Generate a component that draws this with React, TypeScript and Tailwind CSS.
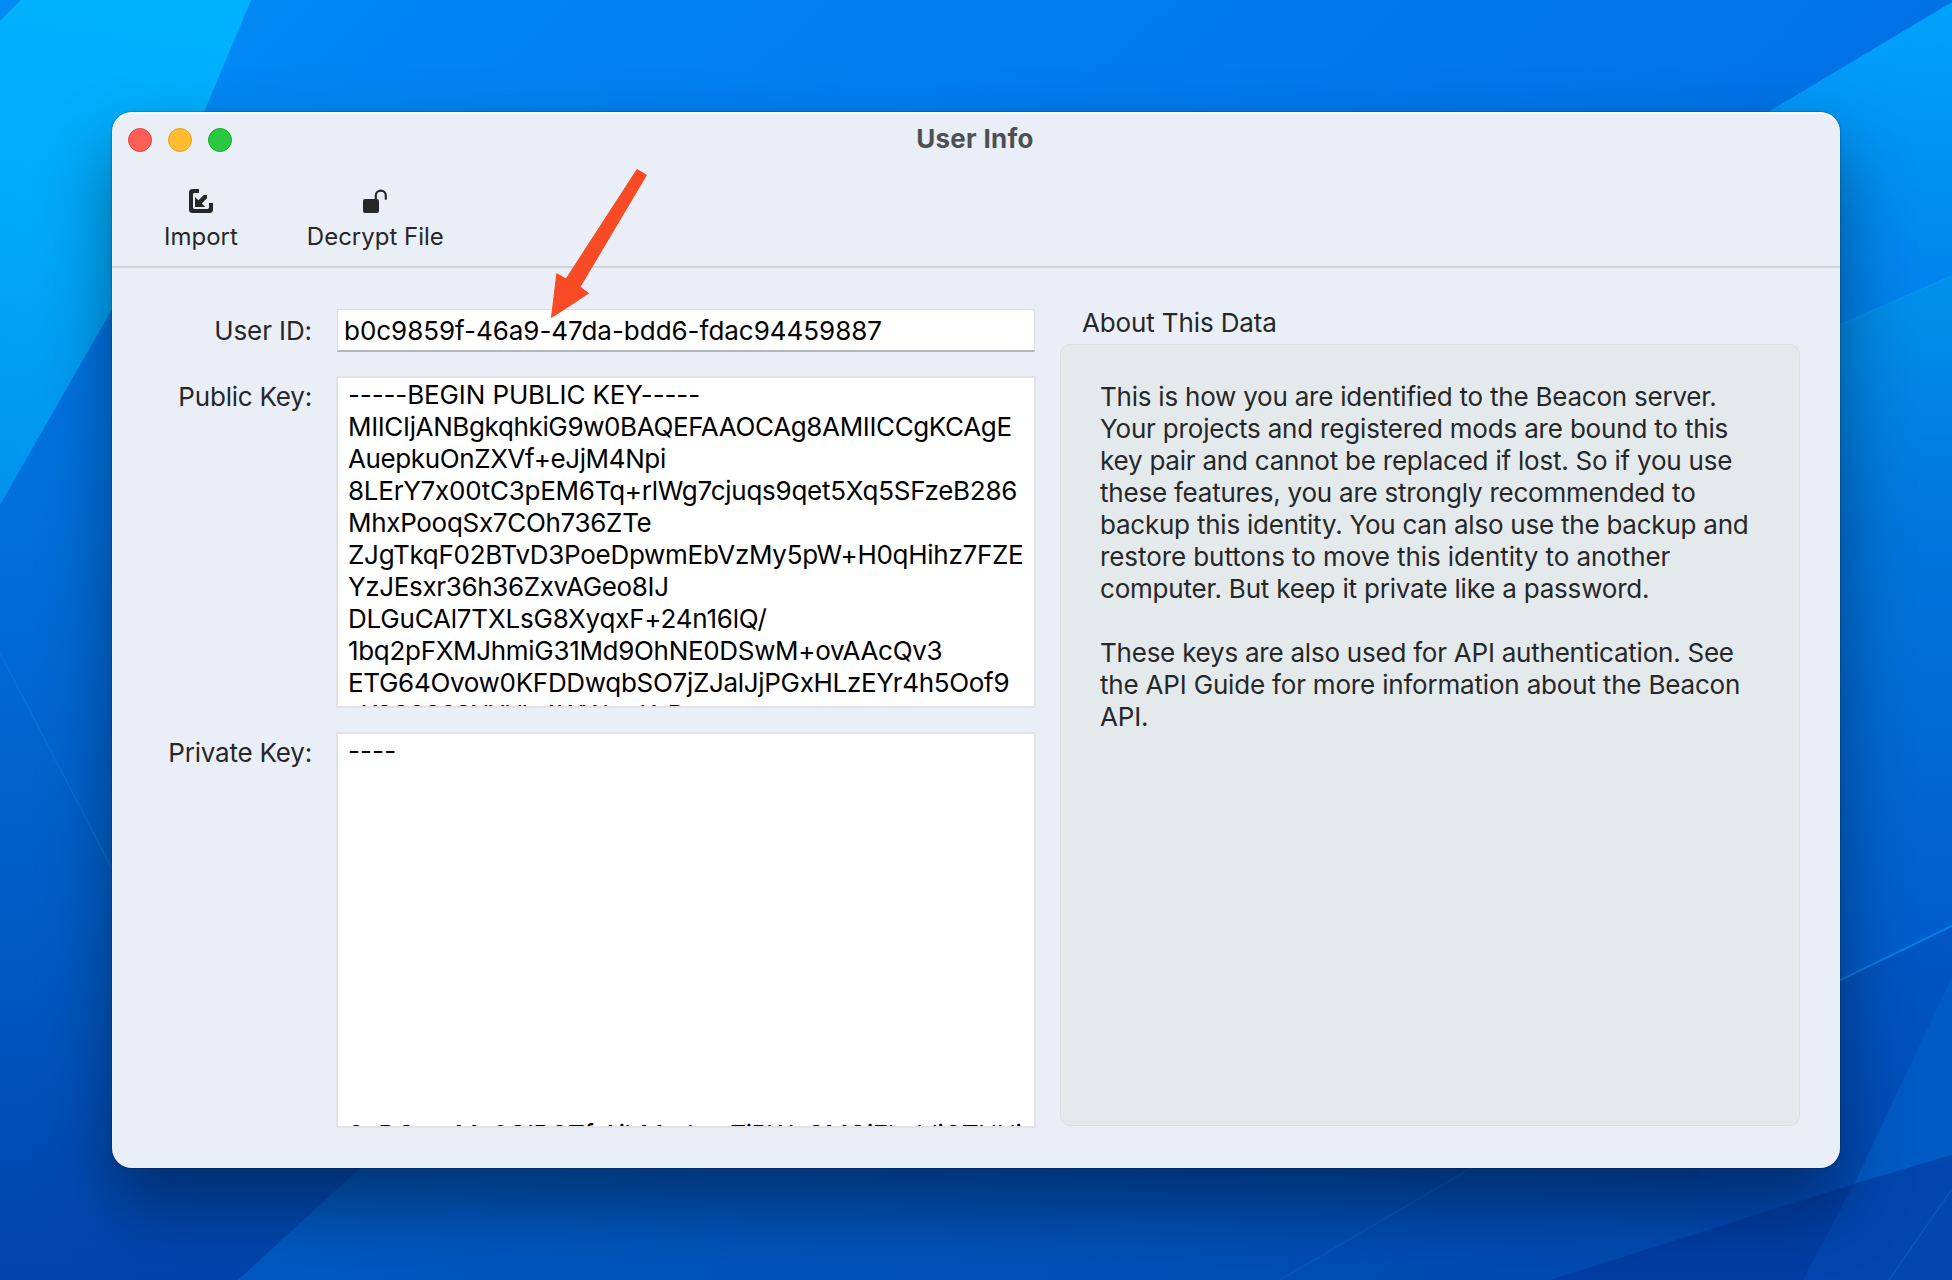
import type { ReactNode } from "react";

type Line = { text: string; tracking: string };

const publicKey: Line[] = [
  { text: "-----BEGIN PUBLIC KEY-----", tracking: "tracking-[-0.12px]" },
  { text: "MIICIjANBgkqhkiG9w0BAQEFAAOCAg8AMIICCgKCAgE", tracking: "tracking-[-0.36px]" },
  { text: "AuepkuOnZXVf+eJjM4Npi", tracking: "tracking-[-0.38px]" },
  { text: "8LErY7x00tC3pEM6Tq+rlWg7cjuqs9qet5Xq5SFzeB286", tracking: "tracking-[-0.25px]" },
  { text: "MhxPooqSx7COh736ZTe", tracking: "tracking-[-0.3px]" },
  { text: "ZJgTkqF02BTvD3PoeDpwmEbVzMy5pW+H0qHihz7FZE", tracking: "tracking-[-0.283px]" },
  { text: "YzJEsxr36h36ZxvAGeo8IJ", tracking: "tracking-[-0.351px]" },
  { text: "DLGuCAl7TXLsG8XyqxF+24n16lQ/", tracking: "tracking-[-0.2px]" },
  { text: "1bq2pFXMJhmiG31Md9OhNE0DSwM+ovAAcQv3", tracking: "tracking-[-0.312px]" },
  { text: "ETG64Ovow0KFDDwqbSO7jZJalJjPGxHLzEYr4h5Oof9", tracking: "tracking-[-0.305px]" },
  { text: "xK3C6C8SNXHhrAWWsruKcD", tracking: "tracking-[-1.6px]" },
];

const privateKeyTail = "8nDGnrnMe0GIPOTfrAjbMndnvrZjPWxGMGjEhvbljOTUUj";

const aboutLines: Line[] = [
  { text: "This is how you are identified to the Beacon server.", tracking: "tracking-[-0.226px]" },
  { text: "Your projects and registered mods are bound to this", tracking: "tracking-[-0.181px]" },
  { text: "key pair and cannot be replaced if lost. So if you use", tracking: "tracking-[-0.22px]" },
  { text: "these features, you are strongly recommended to", tracking: "tracking-[-0.22px]" },
  { text: "backup this identity. You can also use the backup and", tracking: "tracking-[-0.23px]" },
  { text: "restore buttons to move this identity to another", tracking: "tracking-[-0.08px]" },
  { text: "computer. But keep it private like a password.", tracking: "tracking-[-0.205px]" },
];

const apiLines: Line[] = [
  { text: "These keys are also used for API authentication. See", tracking: "tracking-[-0.23px]" },
  { text: "the API Guide for more information about the Beacon", tracking: "tracking-[-0.185px]" },
  { text: "API.", tracking: "tracking-[-0.2px]" },
];

function Lines({ lines }: { lines: Line[] }) {
  return (
    <>
      {lines.map((l) => (
        <div key={l.text} className={`whitespace-pre ${l.tracking}`}>
          {l.text}
        </div>
      ))}
    </>
  );
}

function Wallpaper() {
  return (
    <svg className="absolute inset-0 h-full w-full" viewBox="0 0 1952 1280" preserveAspectRatio="none" aria-hidden="true">
      <defs>
        <linearGradient id="base" x1="0" y1="0" x2="0" y2="1">
          <stop offset="0" stopColor="#007df0" />
          <stop offset="0.4" stopColor="#006fdc" />
          <stop offset="0.72" stopColor="#005cc6" />
          <stop offset="1" stopColor="#0043aa" />
        </linearGradient>
        <linearGradient id="top" x1="0" y1="0" x2="1" y2="0.06">
          <stop offset="0" stopColor="#008cf5" />
          <stop offset="0.5" stopColor="#007eef" />
          <stop offset="1" stopColor="#0072e6" />
        </linearGradient>
        <linearGradient id="leftCyan" gradientUnits="userSpaceOnUse" x1="80" y1="0" x2="0" y2="505">
          <stop offset="0" stopColor="#00b2ff" />
          <stop offset="0.45" stopColor="#00a9fb" />
          <stop offset="1" stopColor="#0092ee" />
        </linearGradient>
        <linearGradient id="rightCyan" gradientUnits="userSpaceOnUse" x1="1900" y1="20" x2="1880" y2="310">
          <stop offset="0" stopColor="#00a1fb" />
          <stop offset="1" stopColor="#0081ec" />
        </linearGradient>
        <linearGradient id="rightLow" gradientUnits="userSpaceOnUse" x1="1900" y1="290" x2="1900" y2="960">
          <stop offset="0" stopColor="#0090ec" />
          <stop offset="0.35" stopColor="#0076dd" />
          <stop offset="1" stopColor="#005ccb" />
        </linearGradient>
        <linearGradient id="rightDeep" gradientUnits="userSpaceOnUse" x1="1900" y1="930" x2="1850" y2="1280">
          <stop offset="0" stopColor="#0056c4" />
          <stop offset="1" stopColor="#0046b0" />
        </linearGradient>
        <linearGradient id="bottom" gradientUnits="userSpaceOnUse" x1="240" y1="1280" x2="1700" y2="1200">
          <stop offset="0" stopColor="#0059c1" />
          <stop offset="0.5" stopColor="#0051b8" />
          <stop offset="1" stopColor="#0049b0" />
        </linearGradient>
      </defs>
      <rect width="1952" height="1280" fill="url(#base)" />
      <path d="M0 0H1952V112H0Z" fill="url(#top)" />
      <path d="M22 0H251L204 112V200L112 309L0 505V22Z" fill="url(#leftCyan)" />
      <path d="M22 0L0 22" stroke="#20b8ff" strokeWidth="1.5" opacity="0.6" />
      <path d="M1952 2L1768 112V360L1952 276Z" fill="url(#rightCyan)" />
      <path d="M1700 388L1952 276V926L1700 1048Z" fill="url(#rightLow)" />
      <path d="M1700 386L1952 276" stroke="#10a0f4" strokeWidth="1.5" opacity="0.5" />
      <path d="M238 1280L380 1150H1600L1700 1048L1840 980L1952 926V1280Z" fill="url(#bottom)" />
      <path d="M1700 1048L1952 926V1280H1700Z" fill="url(#rightDeep)" />
      <path d="M1952 977V1155L1854 1184Z" fill="#005bc6" />
      <path d="M1550 1280L1854 1184L1803 1280Z" fill="#003da2" />
      <path d="M1854 1184L1952 1155V1280H1803Z" fill="#0046ae" />
      <path d="M1700 1048L1952 926" stroke="#0083e4" strokeWidth="2" />
      <path d="M1889 1280L1952 1189" stroke="#0a5cc4" strokeWidth="1.5" opacity="0.8" />
      <path d="M1280 1280L1485 1160" stroke="#0a62c8" strokeWidth="1.5" opacity="0.5" />
      <path d="M0 653L120 884" stroke="#0a86e6" strokeWidth="1.5" opacity="0.4" />
    </svg>
  );
}

function ImportIcon() {
  return (
    <svg className="h-6 w-6" viewBox="0 0 24 24" fill="#262728" aria-hidden="true">
      <path d="M10 0H3.5A3.5 3.5 0 0 0 0 3.5v17A3.5 3.5 0 0 0 3.5 24h17a3.5 3.5 0 0 0 3.5-3.5V14h-4v4.6a1.4 1.4 0 0 1-1.4 1.4H5.4A1.4 1.4 0 0 1 4 18.6V5.4A1.4 1.4 0 0 1 5.4 4H10Z" />
      <path d="M6 8l3.4 3.3L14.8 6H18v3.2l-5.2 5.4L16.2 18H6Z" />
    </svg>
  );
}

function UnlockIcon() {
  return (
    <svg className="h-6 w-6" viewBox="0 0 24 24" aria-hidden="true">
      <rect x="0" y="10" width="16" height="14" rx="2" fill="#262728" />
      <path d="M12.8 11V6.6a5 5 0 0 1 10 0V9.8" fill="none" stroke="#262728" strokeWidth="2.2" strokeLinecap="round" />
    </svg>
  );
}

function ToolButton({ icon, label }: { icon: ReactNode; label: string }) {
  return (
    <button className="flex flex-col items-center gap-2 text-[24px] leading-8 text-[#262728]">
      {icon}
      <span>{label}</span>
    </button>
  );
}

function Row({ label, tracking, labelPad, children }: { label: string; tracking: string; labelPad: string; children: ReactNode }) {
  return (
    <div className="flex gap-6">
      <div className={`w-[200px] shrink-0 text-right text-[#262728] ${tracking} ${labelPad}`}>{label}</div>
      {children}
    </div>
  );
}

export default function App() {
  return (
    <div className="relative h-[1280px] w-[1952px] overflow-hidden p-28 font-['Inter',sans-serif] text-[26px] leading-8 [font-feature-settings:'calt'_0]">
      <Wallpaper />
      <main className="relative flex h-[1056px] w-[1728px] flex-col rounded-[20px] bg-[#eaeff7] shadow-[inset_0_2px_1px_rgba(255,255,255,0.75),0_0_2px_rgba(0,0,0,0.55),0_36px_70px_rgba(0,0,0,0.4)]">
        <header className="h-[156px] shrink-0 border-b-2 border-[#d1d5da]">
          <div className="grid h-14 grid-cols-3 items-center">
            <div className="flex gap-4 pl-4">
              <span className="h-6 w-6 rounded-full border border-[#e2463f] bg-[#ff5f57]" />
              <span className="h-6 w-6 rounded-full border border-[#e1a022] bg-[#febc2e]" />
              <span className="h-6 w-6 rounded-full border border-[#1dad2b] bg-[#28c840]" />
            </div>
            <h1 className="pr-0.5 pb-[3px] text-center font-bold tracking-[0.3px] text-[#4d5053]">User Info</h1>
          </div>
          <div className="flex gap-[69px] pt-[21px] pl-[52px]">
            <ToolButton icon={<ImportIcon />} label="Import" />
            <ToolButton icon={<UnlockIcon />} label="Decrypt File" />
          </div>
        </header>

        <div className="flex flex-1 gap-6">
          <section className="flex flex-col gap-6 pt-[41px]">
            <Row label="User ID:" tracking="tracking-[-0.1px]" labelPad="pt-[6px]">
              <div className="mx-px h-[43px] w-[698px] border border-b-2 border-[#d9dde4] border-b-[#b3b7bc] bg-white pt-[5px] pl-[6px] tracking-[-0.03px] text-black">
                b0c9859f-46a9-47da-bdd6-fdac94459887
              </div>
            </Row>
            <Row label="Public Key:" tracking="tracking-[-0.2px]" labelPad="pt-[5px]">
              <div className="h-[332px] w-[700px] overflow-hidden border-2 border-[#e3e3e3] bg-white pt-px pl-[10px] text-black">
                <Lines lines={publicKey} />
              </div>
            </Row>
            <Row label="Private Key:" tracking="tracking-[-0.2px]" labelPad="pt-[5px]">
              <div className="flex h-[396px] w-[700px] flex-col gap-[352px] overflow-hidden border-2 border-[#e3e3e3] bg-white pt-px pl-[10px] text-black">
                <div className="shrink-0 tracking-[0.1px]">----</div>
                <div className="shrink-0 whitespace-pre tracking-[-0.55px]">{privateKeyTail}</div>
              </div>
            </Row>
          </section>

          <section className="flex w-[740px] flex-col pt-[39px] text-[#262728]">
            <h2 className="h-[37px] pl-[22px] tracking-[-0.13px]">About This Data</h2>
            <div className="h-[782px] rounded-[10px] border border-[#d9dee1] bg-[#e4e9ec] pt-[36px] pl-[39px]">
              <Lines lines={aboutLines} />
              <div className="h-8" />
              <Lines lines={apiLines} />
            </div>
          </section>
        </div>
      </main>

      <svg className="absolute top-[166px] left-[548px] h-[154px] w-[102px]" viewBox="548 166 102 154" aria-hidden="true">
        <path
          d="M637 169.5L646.5 175L580 287L588.5 293.3L551.5 317.5L556.8 273.7L566 279Z"
          fill="#f74a25"
          stroke="#f74a25"
          strokeWidth="1"
          strokeLinejoin="round"
        />
      </svg>
    </div>
  );
}
